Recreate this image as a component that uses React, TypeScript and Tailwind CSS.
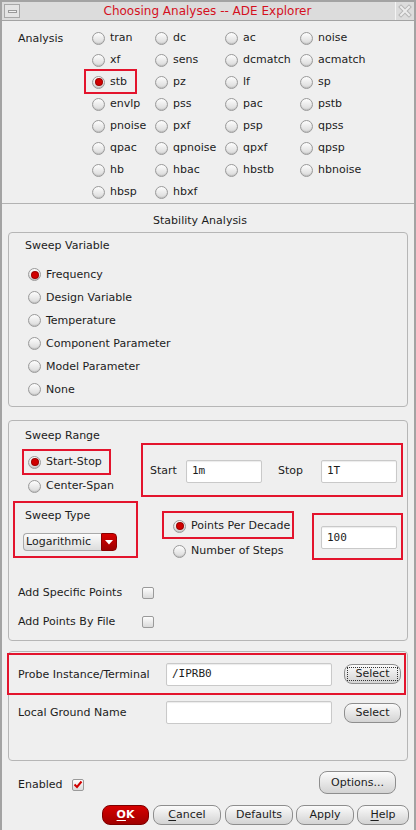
import React from "react";

function Radio({ checked, label }: { checked?: boolean; label: string }) {
  return (
    <div className="flex items-center">
      <span className="flex h-[13px] w-[13px] shrink-0 items-center justify-center rounded-full border border-[#9a9a9a] bg-linear-to-b from-[#fdfdfd] to-[#d9d9d9] shadow-[inset_0_-1px_1px_rgba(0,0,0,0.12)]">
        {checked && <span className="h-[6px] w-[6px] rounded-full bg-[#d10000] shadow-[0_0_0_1px_#9c0000]" />}
      </span>
      <span className="ml-[5px] whitespace-nowrap">{label}</span>
    </div>
  );
}

function Check({ checked }: { checked?: boolean }) {
  return (
    <span className="flex h-[12px] w-[12px] shrink-0 items-center justify-center rounded-[2px] border border-[#9a9a9a] bg-linear-to-b from-[#fdfdfd] to-[#dadada]">
      {checked && (
        <svg width="10" height="9" viewBox="0 0 10 9">
          <path d="M1.5 4.5 L4 7 L8.5 1.5" fill="none" stroke="#d00000" strokeWidth="2" />
        </svg>
      )}
    </span>
  );
}

function Field({ value, w }: { value?: string; w: string }) {
  return (
    <div
      className={`${w} flex h-[23px] shrink-0 items-center rounded-[2px] border border-[#c9c9c9] bg-white pl-[5px] font-['DejaVu_Sans_Mono',monospace] text-[11px] text-[#1c1c1c] shadow-[inset_0_1px_1px_rgba(0,0,0,0.08)]`}
    >
      {value}
    </div>
  );
}

function Button({ children, w, focus }: { children: React.ReactNode; w: string; focus?: boolean }) {
  return (
    <div
      className={`${w} flex h-[20px] shrink-0 items-center justify-center rounded-[8px] border border-[#8e8e8e] bg-linear-to-b from-[#fbfbfb] to-[#d3d3d3]`}
    >
      {focus ? (
        <span className="border border-dotted border-[#333] px-[8px] leading-[12px]">{children}</span>
      ) : (
        children
      )}
    </div>
  );
}

const redBox = "border-2 border-[#e3142d]";

export default function App() {
  const analyses = [
    ["tran", "dc", "ac", "noise"],
    ["xf", "sens", "dcmatch", "acmatch"],
    ["stb", "pz", "lf", "sp"],
    ["envlp", "pss", "pac", "pstb"],
    ["pnoise", "pxf", "psp", "qpss"],
    ["qpac", "qpnoise", "qpxf", "qpsp"],
    ["hb", "hbac", "hbstb", "hbnoise"],
    ["hbsp", "hbxf", "", ""],
  ];
  const sweepVars = ["Frequency", "Design Variable", "Temperature", "Component Parameter", "Model Parameter", "None"];

  return (
    <div className="flex h-[830px] w-[416px] flex-col overflow-hidden border-x-2 border-t-2 border-[#a3a3a3] bg-[#efefef] font-['DejaVu_Sans',sans-serif] text-[11px] leading-[14px] text-[#1c1c1c]">
      {/* title bar */}
      <div className="flex h-[19px] shrink-0 items-stretch border-b border-[#a3a3a3] bg-[#dcdcdc]">
        <div className="my-[2px] ml-[2px] flex w-[16px] items-center justify-center border border-[#a8a8a8] bg-[#e4e4e4]">
          <span className="h-[3px] w-[9px] border border-[#9a9a9a] bg-[#f2f2f2]" />
        </div>
        <div className="flex flex-1 items-center justify-center text-[12px] text-[#d4101e]">
          Choosing Analyses -- ADE Explorer
        </div>
        <div className="flex w-[19px] items-center justify-center border-l border-[#f4f4f4] bg-[#dcdcdc]">
          <svg width="14" height="14" viewBox="0 0 14 14">
            <path d="M3 3 L11 11 M11 3 L3 11" stroke="#b5b5b5" strokeWidth="4" strokeLinecap="square" />
            <path d="M3 3 L11 11 M11 3 L3 11" stroke="#ececec" strokeWidth="2" strokeLinecap="square" />
          </svg>
        </div>
      </div>

      {/* analysis selection */}
      <div className="flex pt-[6px]">
        <div className="flex h-[22px] w-[90px] shrink-0 items-center pl-[16px] pt-[1px]">Analysis</div>
        <div className="grid grid-cols-[63px_70px_75px_auto]">
          {analyses.flat().map((a, i) => (
            <div key={i} className="relative flex h-[22px] items-center">
              {a && <Radio label={a} checked={a === "stb"} />}
              {a === "stb" && <span className={`absolute left-[-8px] top-[-2px] h-[25px] w-[53px] ${redBox}`} />}
            </div>
          ))}
        </div>
      </div>

      <div className="border-t border-[#b2b2b2]" />
      <div className="mt-[10px] h-[14px] pr-[16px] text-center">Stability Analysis</div>

      {/* sweep variable */}
      <div className="mx-[6px] mt-[4px] rounded-[4px] border border-[#b6b6b6] pb-[5px] pt-[6px]">
        <div className="pl-[16px]">Sweep Variable</div>
        <div className="mt-[10px] pl-[19px]">
          {sweepVars.map((v, i) => (
            <div key={v} className="flex h-[23px] items-center">
              <Radio label={v} checked={i === 0} />
            </div>
          ))}
        </div>
      </div>

      {/* sweep range */}
      <div className="mx-[6px] mt-[13px] rounded-[4px] border border-[#b6b6b6] pb-[7px]">
        <div className="flex">
          <div className="w-[132px] shrink-0">
            <div className="pl-[16px] pt-[8px]">Sweep Range</div>
            <div className={`ml-[13px] mt-[6px] flex h-[26px] w-[89px] items-center pl-[4px] ${redBox}`}>
              <Radio label="Start-Stop" checked />
            </div>
            <div className="flex h-[22px] items-center pl-[19px]">
              <Radio label="Center-Span" />
            </div>
          </div>
          <div className={`mt-[22px] flex h-[54px] w-[262px] items-center pl-[7px] pt-[2px] ${redBox}`}>
            <span className="w-[36px]">Start</span>
            <Field value="1m" w="w-[76px]" />
            <span className="ml-[16px] w-[43px]">Stop</span>
            <Field value="1T" w="w-[76px]" />
          </div>
        </div>

        <div className="flex items-start">
          <div className={`ml-[4px] mt-[4px] h-[57px] w-[125px] ${redBox}`}>
            <div className="mt-[6px] pl-[10px]">Sweep Type</div>
            <div className="ml-[8px] mt-[10px] flex h-[18px] w-[94px]">
              <div className="flex flex-1 items-center rounded-l-[4px] border border-r-0 border-[#a9a9a9] bg-linear-to-b from-[#fcfcfc] to-[#dcdcdc] pl-[2px]">
                Logarithmic
              </div>
              <div className="flex w-[16px] items-center justify-center rounded-r-[4px] border border-[#8a0000] bg-linear-to-b from-[#d80000] to-[#9c0000]">
                <svg width="8" height="5" viewBox="0 0 8 5">
                  <path d="M0 0 L8 0 L4 4.5 Z" fill="#ffffff" />
                </svg>
              </div>
            </div>
          </div>
          <div className="ml-[24px] mt-[14px]">
            <div className={`flex h-[28px] w-[132px] items-center pl-[9px] pt-[2px] ${redBox}`}>
              <Radio label="Points Per Decade" checked />
            </div>
            <div className="mt-[1px] flex h-[22px] items-center pl-[11px]">
              <Radio label="Number of Steps" />
            </div>
          </div>
          <div className={`ml-[18px] mt-[16px] h-[47px] w-[91px] pl-[7px] pt-[11px] ${redBox}`}>
            <Field value="100" w="w-[76px]" />
          </div>
        </div>

        <div className="mt-[20px] flex h-[22px] items-center pl-[9px]">
          <span className="w-[124px]">Add Specific Points</span>
          <Check />
        </div>
        <div className="mt-[7px] flex h-[22px] items-center pl-[9px]">
          <span className="w-[124px]">Add Points By File</span>
          <Check />
        </div>
      </div>

      {/* probe */}
      <div className="mx-[6px] mt-[10px] rounded-[4px] border border-[#b6b6b6] pb-[36px]">
        <div className={`-ml-[2px] mt-[1px] flex h-[42px] w-[399px] items-center pl-[9px] ${redBox}`}>
          <span className="w-[148px] pt-[1px]">Probe Instance/Terminal</span>
          <Field value="/IPRB0" w="w-[166px]" />
          <div className="ml-[12px]">
            <Button w="w-[57px]" focus>
              Select
            </Button>
          </div>
        </div>
        <div className="mt-[6px] flex h-[23px] items-center pl-[9px]">
          <span className="w-[148px]">Local Ground Name</span>
          <Field w="w-[166px]" />
          <div className="ml-[12px]">
            <Button w="w-[57px]">Select</Button>
          </div>
        </div>
      </div>

      {/* enabled / options */}
      <div className="mt-[10px] flex h-[23px] items-center pl-[16px] pr-[18px]">
        <span className="w-[54px] pt-[4px]">Enabled</span>
        <span className="pt-[4px]">
          <Check checked />
        </span>
        <div className="ml-auto flex h-[23px] w-[77px] items-center justify-center rounded-[8px] border border-[#8e8e8e] bg-linear-to-b from-[#fbfbfb] to-[#d3d3d3]">
          Options...
        </div>
      </div>

      {/* dialog buttons */}
      <div className="mt-[11px] flex justify-end pr-[5px]">
        <div className="flex h-[20px] w-[47px] items-center justify-center rounded-[8px] border border-[#7c0000] bg-linear-to-b from-[#d60000] to-[#a00000] font-bold text-white">
          <span className="underline underline-offset-2">O</span>K
        </div>
        <div className="ml-[4px]">
          <Button w="w-[68px]">
            <span>
              <span className="underline underline-offset-2">C</span>ancel
            </span>
          </Button>
        </div>
        <div className="ml-[4px]">
          <Button w="w-[68px]">Defaults</Button>
        </div>
        <div className="ml-[3px]">
          <Button w="w-[58px]">Apply</Button>
        </div>
        <div className="ml-[3px]">
          <Button w="w-[52px]">
            <span>
              <span className="underline underline-offset-2">H</span>elp
            </span>
          </Button>
        </div>
      </div>
    </div>
  );
}
